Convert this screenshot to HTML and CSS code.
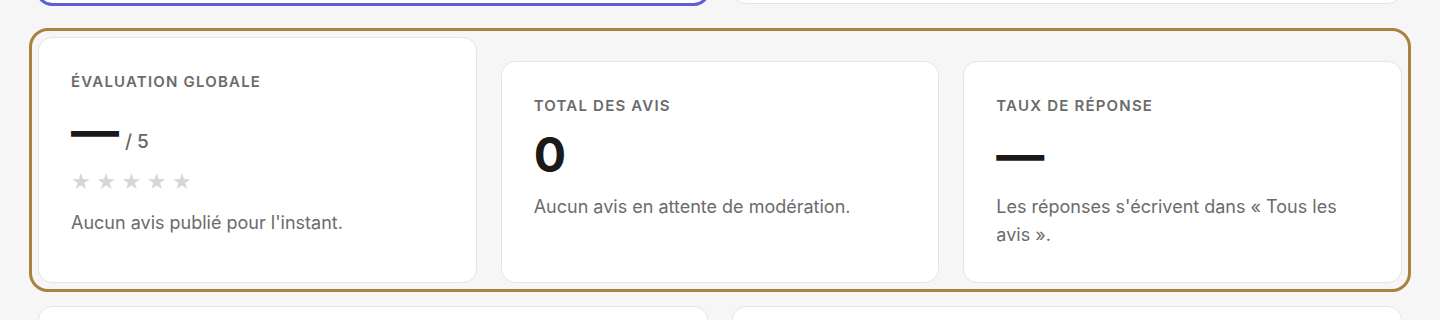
FILE: index.html
```html
<!DOCTYPE html>
<html lang="fr">
<head>
    <meta charset="UTF-8">
    <meta name="viewport" content="width=device-width, initial-scale=1.0">
    <title>Avis</title>
    <link rel="stylesheet" href="styles.css">
</head>
<body>
    <div class="page">
        <div class="row-two row-top">
            <div class="panel panel-active"></div>
            <div class="panel"></div>
        </div>

        <div class="stats">
            <div class="stat-card stat-main">
                <div class="stat-label">Évaluation globale</div>
                <div class="stat-value">—<span class="stat-suffix">/ 5</span></div>
                <div class="stars">★★★★★</div>
                <p class="stat-note note-main">Aucun avis publié pour l'instant.</p>
            </div>
            <div class="stat-card">
                <div class="stat-label">Total des avis</div>
                <div class="stat-value">0</div>
                <p class="stat-note">Aucun avis en attente de modération.</p>
            </div>
            <div class="stat-card">
                <div class="stat-label">Taux de réponse</div>
                <div class="stat-value">—</div>
                <p class="stat-note">Les réponses s'écrivent dans « Tous les avis ».</p>
            </div>
        </div>

        <div class="row-two row-bottom">
            <div class="panel"></div>
            <div class="panel"></div>
        </div>
    </div>
</body>
</html>
```

FILE: styles.css
```css
body{
    margin: 0;
    padding: 0;
    background-color: #f6f6f6;
    font-family: Inter, "Noto Sans", Arial, sans-serif;
    color: #1a1a1a;
    overflow: hidden;
}
.page{
    padding: 0 38px;
}
.row-two{
    display: grid;
    grid-template-columns: 1fr 1fr;
    gap: 24px;
}
.panel{
    height: 120px;
    background-color: white;
    border: 1px solid #e4e4e4;
    border-radius: 14px;
}
.row-top .panel{margin-top: -118px;}
.panel-active{
    outline: 3px solid #5c60d8;
    outline-offset: -1px;
}
.row-bottom{margin-top: 23px;}

.stats{
    margin-top: 33px;
    display: grid;
    grid-template-columns: repeat(3, 1fr);
    gap: 24px;
    outline: 3px solid #a9823f;
    outline-offset: 6px;
    border-radius: 10px;
}
.stat-card{
    margin-top: 24px;
    background-color: white;
    border: 1px solid #e4e4e4;
    border-radius: 14px;
    padding: 34px 32px 33px;
}
.stat-main{margin-top: 0;}
.stat-label{
    font-size: 15px;
    font-weight: 600;
    letter-spacing: 0.08em;
    text-transform: uppercase;
    color: #6b6b6b;
    line-height: 20px;
}
.stat-value{
    margin-top: 11px;
    font-size: 48px;
    font-weight: 700;
    line-height: 56px;
}
.stat-suffix{
    margin-left: 6px;
    font-size: 19px;
    font-weight: 500;
    color: #666;
}
.stars{
    margin-top: 0;
    font-size: 22px;
    letter-spacing: 5.5px;
    color: #d6d6da;
    font-family: "DejaVu Sans", sans-serif;
    line-height: 24px;
}
.stat-note{
    margin: 10px 0 0;
    font-size: 18px;
    line-height: 28px;
    color: #6b6b6b;
}
.note-main{margin-top: 15px;}
```
